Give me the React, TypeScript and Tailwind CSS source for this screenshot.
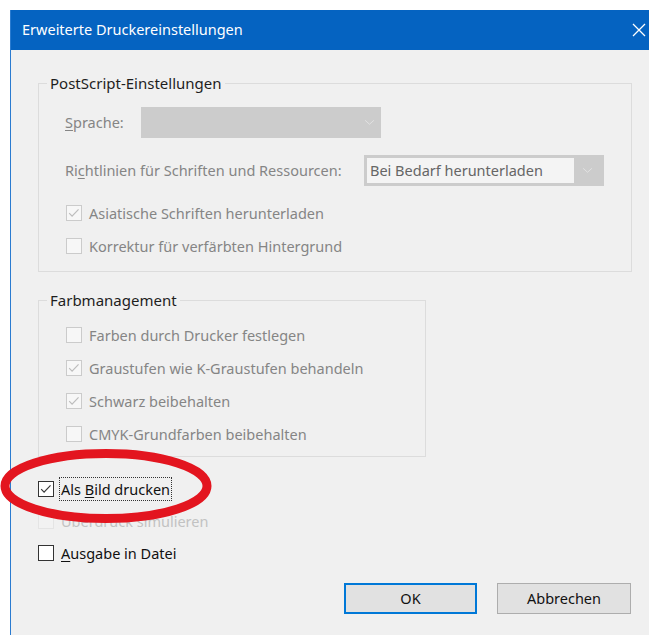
import type { ReactNode } from "react";

type Tone = "on" | "off" | "ghost";

function Box({ checked, tone }: { checked?: boolean; tone: Tone }) {
  const frame =
    tone === "on"
      ? "border-[#333333] bg-white"
      : tone === "off"
        ? "border-[#cbcbcb] bg-[#f7f7f7]"
        : "border-[#e4e4e4] bg-[#f2f2f2]";
  const mark = tone === "on" ? "#3a3a3a" : "#bdbdbd";
  return (
    <span className={`flex h-[16px] w-[16px] shrink-0 items-center justify-center border ${frame}`}>
      {checked && (
        <svg viewBox="0 0 16 16" className="h-[14px] w-[14px]">
          <path d="M2.5 8.2l3.3 3.3 7.4-7.6" fill="none" stroke={mark} strokeWidth="1.4" />
        </svg>
      )}
    </span>
  );
}

function Check({
  label,
  checked,
  tone = "off",
  focused,
}: {
  label: ReactNode;
  checked?: boolean;
  tone?: Tone;
  focused?: boolean;
}) {
  const text =
    tone === "on" ? "text-[#111111]" : tone === "off" ? "text-[#858585]" : "text-[#c2c2c2]";
  return (
    <div className="flex h-[33px] items-center">
      <Box checked={checked} tone={tone} />
      <span
        className={`ml-[5px] px-[1px] leading-[22px] ${text} ${
          focused ? "border border-dotted border-[#333333]" : "border border-transparent"
        }`}
      >
        {label}
      </span>
    </div>
  );
}

function Chevron({ color }: { color: string }) {
  return (
    <svg viewBox="0 0 12 8" className="h-[7px] w-[11px]">
      <path d="M1 1.5l5 4.5 5-4.5" fill="none" stroke={color} strokeWidth="1.1" />
    </svg>
  );
}

export default function App() {
  return (
    <div className="relative h-[635px] w-[649px] overflow-hidden bg-white pl-[10px] pt-[10px] font-['Noto_Sans',sans-serif] text-[14.5px]">
      <div className="flex h-full flex-col border-l border-[#2a7bd0] bg-[#f0f0f0]">
        {/* title bar */}
        <div className="flex h-[40px] shrink-0 items-center justify-between bg-[#0563c1] pl-[11px] pr-[3px] text-[14.5px] text-white">
          <span>Erweiterte Druckereinstellungen</span>
          <svg viewBox="0 0 14 14" className="h-[14px] w-[14px]">
            <path d="M1 1l12 12M13 1L1 13" stroke="#ffffff" strokeWidth="1.3" />
          </svg>
        </div>

        <div className="flex flex-1 flex-col pl-[27px] pr-[18px] pt-[23px]">
          <fieldset className="h-[199px] w-[594px] border border-[#dcdcdc] p-0">
            <legend className="ml-[8px] px-[3px] text-[15px] leading-[20px] text-[#1e1e1e]">
              PostScript-Einstellungen
            </legend>
            <div className="flex flex-col pl-[26px]">
              <div className="mt-[14px] flex h-[31px] items-center">
                <span className="w-[76px] text-[#858585]">
                  <span className="underline underline-offset-2">S</span>prache:
                </span>
                <div className="flex h-full w-[240px] items-center justify-end bg-[#cccccc] pr-[6px]">
                  <Chevron color="#e2e2e2" />
                </div>
              </div>
              <div className="mt-[17px] flex h-[31px] items-center">
                <span className="w-[299px] text-[#858585]">
                  Ri<span className="underline underline-offset-2">c</span>htlinien für Schriften und
                  Ressourcen:
                </span>
                <div className="flex h-full w-[240px] items-center bg-[#cccccc] p-[3px]">
                  <div className="flex h-full flex-1 items-center bg-[#f4f4f4] pl-[3px] text-[#666666]">
                    Bei Bedarf herunterladen
                  </div>
                  <div className="flex w-[27px] justify-center">
                    <Chevron color="#e2e2e2" />
                  </div>
                </div>
              </div>
              <div className="mt-[10px] pl-[1px]">
                <Check label="Asiatische Schriften herunterladen" checked />
                <Check label="Korrektur für verfärbten Hintergrund" />
              </div>
            </div>
          </fieldset>

          <fieldset className="mt-[18px] h-[167px] w-[388px] border border-[#dcdcdc] p-0">
            <legend className="ml-[8px] px-[3px] text-[15px] leading-[20px] text-[#1e1e1e]">
              Farbmanagement
            </legend>
            <div className="mt-[8px] pl-[27px]">
              <Check label="Farben durch Drucker festlegen" />
              <Check label="Graustufen wie K-Graustufen behandeln" checked />
              <Check label="Schwarz beibehalten" checked />
              <Check label="CMYK-Grundfarben beibehalten" />
            </div>
          </fieldset>

          <div className="mt-[16px] flex flex-col [&>div]:h-[32px]">
            <Check
              tone="on"
              checked
              focused
              label={
                <>
                  Als <span className="underline underline-offset-2">B</span>ild drucken
                </>
              }
            />
            <Check tone="ghost" label="Überdruck simulieren" />
            <Check
              tone="on"
              label={
                <>
                  <span className="underline underline-offset-2">A</span>usgabe in Datei
                </>
              }
            />
          </div>

          <div className="mt-[14px] flex justify-end gap-[20px]">
            <button className="h-[31px] w-[133px] border-2 border-[#0078d7] bg-[#e1e1e1] text-[#111111]">
              OK
            </button>
            <button className="h-[31px] w-[134px] border border-[#adadad] bg-[#e1e1e1] text-[#111111]">
              Abbrechen
            </button>
          </div>
        </div>
      </div>

      {/* red marker around the print-as-image option */}
      <svg
        viewBox="0 0 214 76"
        className="pointer-events-none absolute left-0 top-[449px] h-[76px] w-[214px]"
      >
        <ellipse cx="106" cy="37" rx="101" ry="32.5" fill="none" stroke="#e3151f" strokeWidth="9" />
      </svg>
    </div>
  );
}
